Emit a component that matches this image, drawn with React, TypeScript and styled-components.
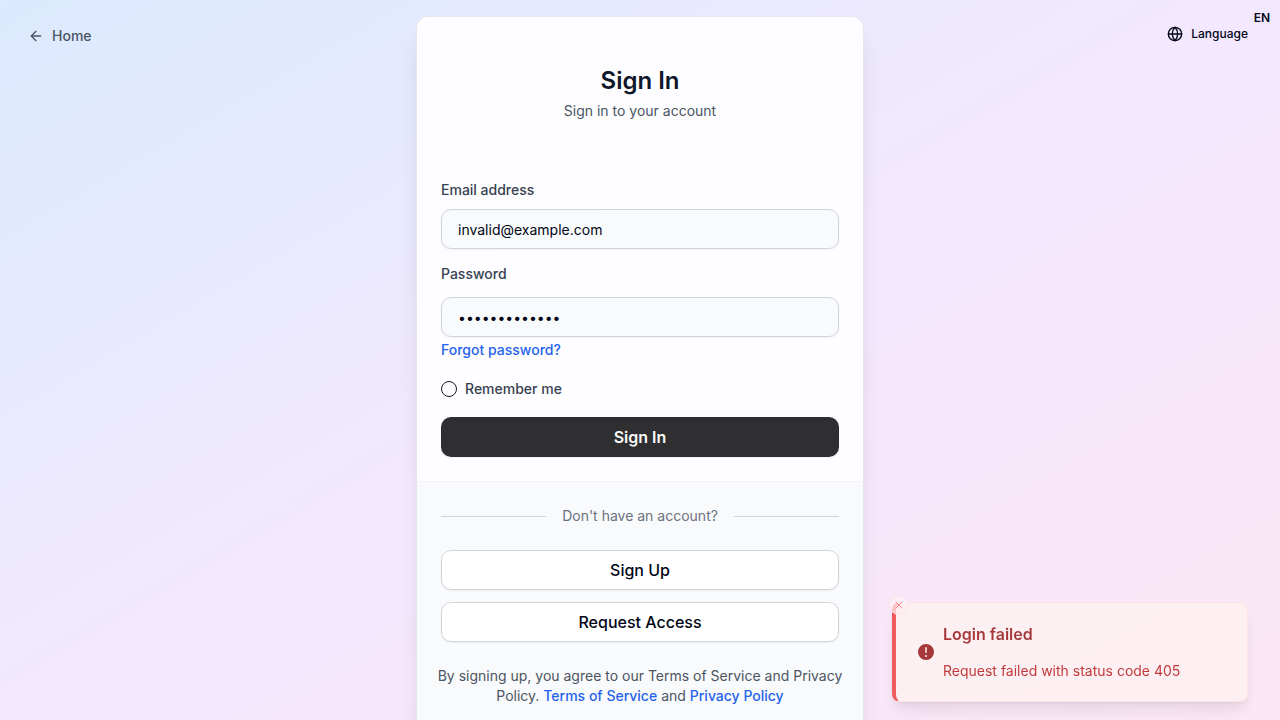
import React from "react";
import styled, { createGlobalStyle } from "styled-components";
import { ArrowLeft, Globe, X } from "lucide-react";

const GlobalStyle = createGlobalStyle`
  *, *::before, *::after { box-sizing: border-box; }
  body {
    margin: 0;
    font-family: Inter, "Liberation Sans", sans-serif;
    font-size: 14px;
    line-height: 20px;
    color: #020617;
  }
  h1, h2, p { margin: 0; }
  button, input { font: inherit; color: inherit; }
  button { cursor: pointer; }
`;

const Page = styled.div`
  position: relative;
  min-height: 100vh;
  padding: 16px;
  display: flex;
  align-items: center;
  justify-content: center;
  background: linear-gradient(to bottom right, #dbeafe, #f3e8ff, #fce7f3);
`;

const HomeLink = styled.a`
  position: absolute;
  top: 16px;
  left: 16px;
  display: flex;
  align-items: center;
  gap: 8px;
  padding: 10px 12px;
  color: #4b5563;
  font-weight: 500;
  text-decoration: none;
`;

const LanguageButton = styled.button`
  position: absolute;
  top: 16px;
  right: 16px;
  display: flex;
  align-items: center;
  gap: 8px;
  height: 36px;
  padding: 0 16px;
  border: 0;
  background: transparent;
  font-size: 12px;
  font-weight: 500;
`;

const LanguageBadge = styled.span`
  position: absolute;
  top: -8px;
  right: -8px;
  display: flex;
  align-items: center;
  justify-content: center;
  width: 20px;
  height: 20px;
  border: 1px solid rgba(226, 232, 240, 0.6);
  border-radius: 50%;
  font-size: 12px;
  font-weight: 600;
`;

const Card = styled.main`
  width: 100%;
  max-width: 448px;
  border: 1px solid #e5e7eb;
  border-radius: 12px;
  overflow: hidden;
  background: rgba(255, 255, 255, 0.9);
  box-shadow: 0 20px 25px -5px rgba(0, 0, 0, 0.1), 0 8px 10px -6px rgba(0, 0, 0, 0.1);
`;

const CardHeader = styled.header`
  display: flex;
  flex-direction: column;
  align-items: center;
  gap: 4px;
  padding: 48px 24px;
`;

const Title = styled.h1`
  font-size: 24px;
  line-height: 32px;
  font-weight: 600;
  color: #0f172a;
`;

const Subtitle = styled.p`
  color: #4b5563;
`;

const LoginForm = styled.form`
  display: flex;
  flex-direction: column;
  padding: 11px 24px 24px;
`;

const Field = styled.div<{ $gap: number }>`
  display: flex;
  flex-direction: column;
  align-items: flex-start;
  gap: ${(p) => p.$gap}px;
  margin-bottom: 15px;
`;

const Label = styled.label`
  font-weight: 500;
  line-height: 20px;
  color: #374151;
`;

const TextInput = styled.input`
  width: 100%;
  height: 40px;
  padding: 8px 16px;
  border: 1px solid #d1d5db;
  border-radius: 10px;
  outline: none;
  background: #f9fafb;
  box-shadow: 0 1px 2px rgba(0, 0, 0, 0.05);
`;

const PasswordGroup = styled.div`
  width: 100%;
  display: flex;
  flex-direction: column;
  align-items: flex-start;
  gap: 3px;
`;

const TextLink = styled.a`
  font-weight: 500;
  color: #2563eb;
  text-decoration: none;
`;

const RememberRow = styled.div`
  display: flex;
  align-items: center;
  gap: 8px;
  padding: 4px 0;
  margin-bottom: 14px;
`;

const RoundCheckbox = styled.input`
  appearance: none;
  width: 16px;
  height: 16px;
  margin: 0;
  border: 1px solid #18181b;
  border-radius: 50%;
  &:checked { background: #18181b; }
`;

const ActionButton = styled.button<{ $primary?: boolean }>`
  width: 100%;
  height: 40px;
  border: ${(p) => (p.$primary ? "0" : "1px solid #d1d5db")};
  border-radius: 10px;
  background: ${(p) => (p.$primary ? "#2f2f31" : "#ffffff")};
  color: ${(p) => (p.$primary ? "#fafafa" : "#020617")};
  font-size: 16px;
  line-height: 24px;
  font-weight: ${(p) => (p.$primary ? 600 : 500)};
  box-shadow: 0 1px 2px rgba(0, 0, 0, 0.05);
`;

const CardFooter = styled.footer`
  display: flex;
  flex-direction: column;
  gap: 24px;
  padding: 24px 0;
  border-top: 1px solid #f3f4f6;
  background: #f9fafb;
`;

const Divider = styled.div`
  display: flex;
  align-items: center;
  gap: 16px;
  padding: 0 24px;
  color: #6b7280;
  &::before, &::after {
    content: "";
    flex: 1;
    height: 1px;
    background: #d1d5db;
  }
`;

const ButtonStack = styled.div`
  display: flex;
  flex-direction: column;
  gap: 12px;
  padding: 0 24px;
`;

const Terms = styled.p`
  padding: 0 16px;
  text-align: center;
  color: #4b5563;
`;

const Toast = styled.section`
  position: fixed;
  right: 32px;
  bottom: 18px;
  width: 356px;
  display: flex;
  align-items: center;
  gap: 7px;
  padding: 19px 20px 20px;
  border: 1px solid #fee2e2;
  border-left: 4px solid #ef4444;
  border-radius: 8px;
  background: #fef2f2;
  box-shadow: 0 10px 15px -3px rgba(0, 0, 0, 0.1), 0 4px 6px -4px rgba(0, 0, 0, 0.1);
  opacity: 0.86;
`;

const ToastBody = styled.div`
  display: flex;
  flex-direction: column;
  gap: 15px;
`;

const ToastTitle = styled.h2`
  font-size: 16px;
  line-height: 24px;
  font-weight: 600;
  color: #991b1b;
`;

const ToastText = styled.p`
  color: #b91c1c;
`;

const ToastClose = styled.button`
  position: absolute;
  top: -8px;
  left: -7px;
  display: flex;
  align-items: center;
  justify-content: center;
  width: 20px;
  height: 20px;
  padding: 0;
  border: 1px solid #fee2e2;
  border-radius: 50%;
  background: rgba(254, 242, 242, 0.7);
  color: #ef4444;
`;

function AlertIcon() {
  return (
    <svg width="20" height="20" viewBox="0 0 20 20" fill="#991b1b" aria-hidden="true">
      <path
        fillRule="evenodd"
        clipRule="evenodd"
        d="M18 10a8 8 0 1 1-16 0 8 8 0 0 1 16 0Zm-8-5a.75.75 0 0 1 .75.75v4.5a.75.75 0 0 1-1.5 0v-4.5A.75.75 0 0 1 10 5Zm0 10a1 1 0 1 0 0-2 1 1 0 0 0 0 2Z"
      />
    </svg>
  );
}

export default function App() {
  return (
    <>
      <GlobalStyle />
      <Page>
        <HomeLink href="#home">
          <ArrowLeft size={16} />
          Home
        </HomeLink>
        <LanguageButton type="button">
          <Globe size={16} />
          Language
          <LanguageBadge>EN</LanguageBadge>
        </LanguageButton>

        <Card>
          <CardHeader>
            <Title>Sign In</Title>
            <Subtitle>Sign in to your account</Subtitle>
          </CardHeader>

          <LoginForm onSubmit={(e) => e.preventDefault()}>
            <Field $gap={9}>
              <Label htmlFor="email">Email address</Label>
              <TextInput id="email" type="email" defaultValue="invalid@example.com" />
            </Field>
            <Field $gap={13}>
              <Label htmlFor="password">Password</Label>
              <PasswordGroup>
                <TextInput id="password" type="password" defaultValue="wrongpassword" />
                <TextLink href="#forgot">Forgot password?</TextLink>
              </PasswordGroup>
            </Field>
            <RememberRow>
              <RoundCheckbox id="remember" type="checkbox" />
              <Label htmlFor="remember">Remember me</Label>
            </RememberRow>
            <ActionButton $primary type="submit">Sign In</ActionButton>
          </LoginForm>

          <CardFooter>
            <Divider>Don't have an account?</Divider>
            <ButtonStack>
              <ActionButton type="button">Sign Up</ActionButton>
              <ActionButton type="button">Request Access</ActionButton>
            </ButtonStack>
            <Terms>
              By signing up, you agree to our Terms of Service and Privacy Policy.{" "}
              <TextLink href="#terms">Terms of Service</TextLink> and{" "}
              <TextLink href="#privacy">Privacy Policy</TextLink>
            </Terms>
          </CardFooter>
        </Card>

        <Toast role="alert">
          <ToastClose type="button" aria-label="Close">
            <X size={12} strokeWidth={1.5} />
          </ToastClose>
          <AlertIcon />
          <ToastBody>
            <ToastTitle>Login failed</ToastTitle>
            <ToastText>Request failed with status code 405</ToastText>
          </ToastBody>
        </Toast>
      </Page>
    </>
  );
}
